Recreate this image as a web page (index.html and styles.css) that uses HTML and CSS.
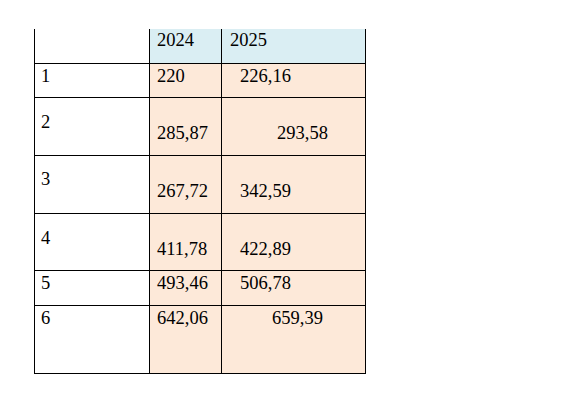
FILE: index.html
```html
<!DOCTYPE html>
<html lang="ru">
<head>
<meta charset="utf-8">
<title>Таблица</title>
<link rel="stylesheet" href="styles.css">
</head>
<body>
<div class="table" role="table">
  <div class="cell c1 head" role="cell"></div>
  <div class="cell c2 head blue" role="columnheader">2024</div>
  <div class="cell c3 head blue" role="columnheader">2025</div>

  <div class="cell c1 r-short" role="cell">1</div>
  <div class="cell c2 r-short peach" role="cell">220</div>
  <div class="cell c3 r-short peach ind-a" role="cell">226,16</div>

  <div class="cell c1 r-tall" role="cell">2</div>
  <div class="cell c2 r-tall-val peach" role="cell">285,87</div>
  <div class="cell c3 r-tall-val peach ind-c" role="cell">293,58</div>

  <div class="cell c1 r-tall r-tall-3" role="cell">3</div>
  <div class="cell c2 r-tall-val peach" role="cell">267,72</div>
  <div class="cell c3 r-tall-val peach ind-a" role="cell">342,59</div>

  <div class="cell c1 r-tall" role="cell">4</div>
  <div class="cell c2 r-tall-val peach" role="cell">411,78</div>
  <div class="cell c3 r-tall-val peach ind-a" role="cell">422,89</div>

  <div class="cell c1 r-short" role="cell">5</div>
  <div class="cell c2 r-short peach" role="cell">493,46</div>
  <div class="cell c3 r-short peach ind-a" role="cell">506,78</div>

  <div class="cell c1 r-short" role="cell">6</div>
  <div class="cell c2 r-short peach" role="cell">642,06</div>
  <div class="cell c3 r-short peach ind-b" role="cell">659,39</div>
</div>
</body>
</html>
```
FILE: styles.css
```css
html, body {
  margin: 0;
  background: #ffffff;
}

body {
  padding: 29px 0 0 34px;
  font-family: "Liberation Serif", "Times New Roman", serif;
  font-size: 18.5px;
  line-height: 18px;
  color: #000000;
}

.table {
  display: inline-grid;
  grid-template-columns: 114px 71px 143px;
  grid-template-rows: 34px 33px 57px 57px 56px 34px 67px;
  gap: 1px;
  padding: 0 1px 1px 1px;
  background: #000000;
}

.cell {
  background: #ffffff;
  white-space: nowrap;
}

.blue {
  background: #daeef3;
}

.peach {
  background: #fde9d9;
}

.c1 {
  padding-left: 6px;
}

.c2 {
  padding-left: 7px;
}

.c3 {
  padding-left: 8px;
}

.head {
  padding-top: 2px;
}

.r-short {
  padding-top: 3px;
}

.r-tall {
  padding-top: 15px;
}

.r-tall-3 {
  padding-top: 14px;
}

.r-tall-val {
  padding-top: 26px;
}

.ind-a {
  padding-left: 18px;
}

.ind-b {
  padding-left: 50px;
}

.ind-c {
  padding-left: 55px;
}
```
